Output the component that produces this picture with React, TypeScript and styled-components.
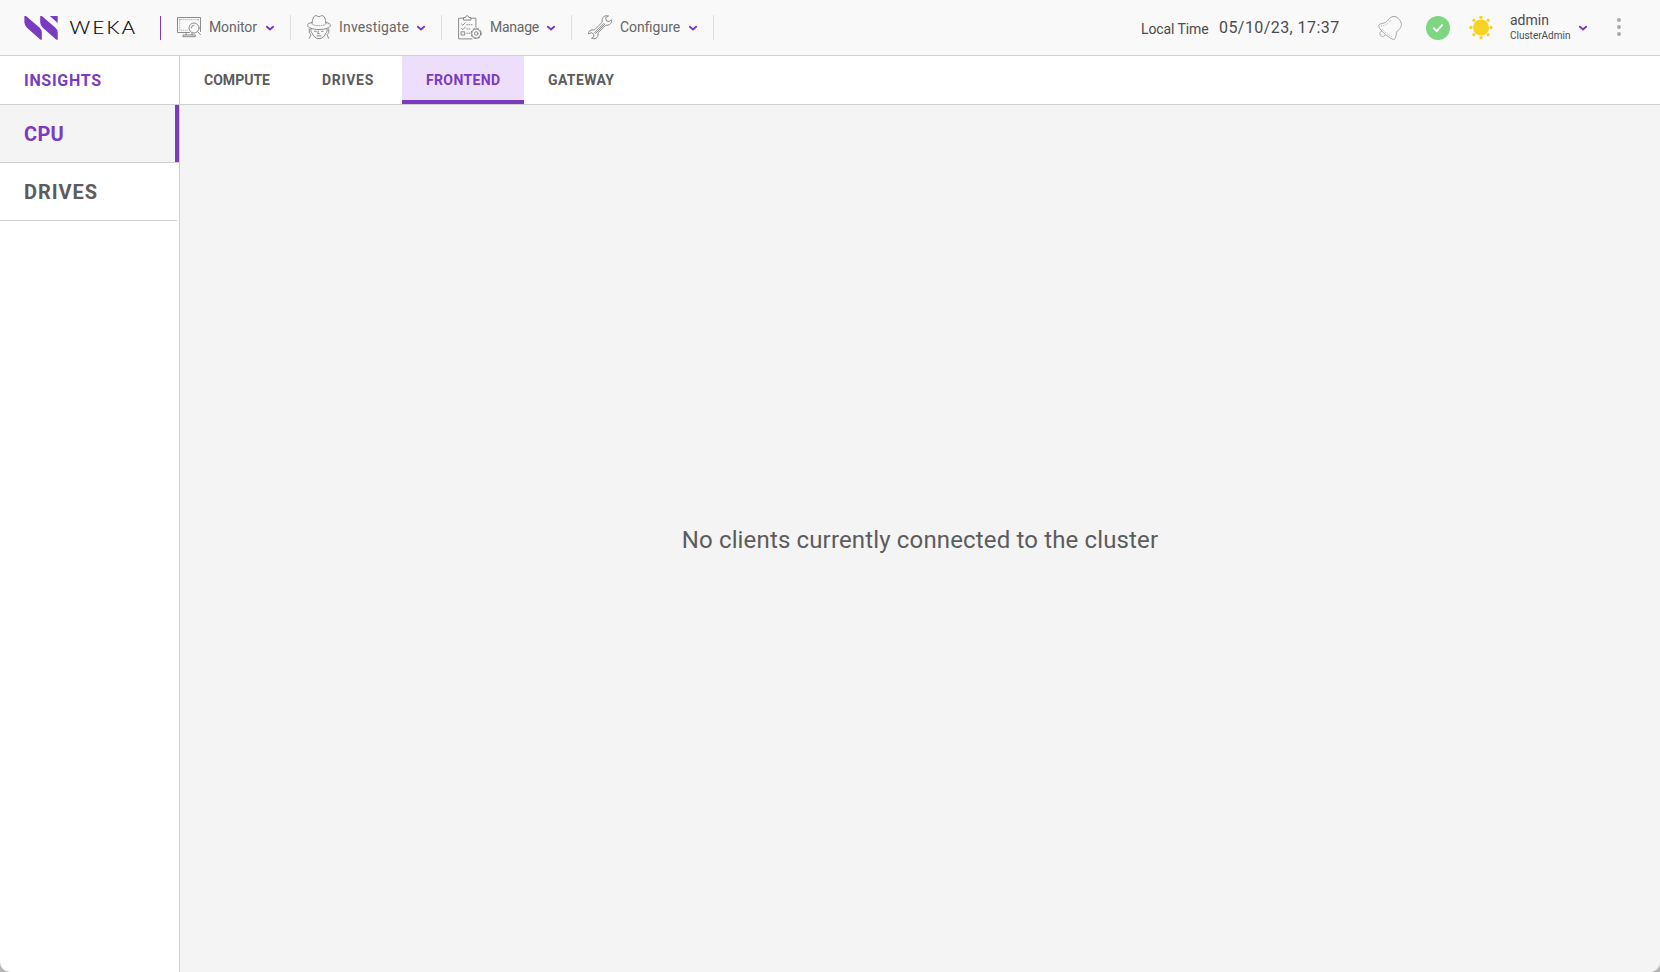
import React from 'react';
import styled, { createGlobalStyle } from 'styled-components';

const purple = '#7a3bc1';
const line = '#d0d0d0';

const GlobalStyle = createGlobalStyle`
  * { box-sizing: border-box; }
  html { background: #b5b5b5; }
  body { margin: 0; font-family: Roboto, "Open Sans", sans-serif; color: #5c5c5c; }
`;

const Window = styled.div`
  display: flex;
  flex-direction: column;
  height: 100vh;
  overflow: hidden;
  background: #fff;
  border-radius: 0 0 10px 10px;
`;

const Header = styled.header`
  display: flex;
  align-items: center;
  flex: none;
  height: 56px;
  padding: 0 39px 0 24px;
  background: #f9f9f9;
  border-bottom: 1px solid ${line};
`;

const Brand = styled.div`
  display: flex;
  align-items: center;
  width: 137px;
  height: 24px;
  border-right: 1px solid ${purple};
  margin-top: 1px;
`;

const Nav = styled.nav`
  display: flex;
`;

const NavItem = styled.div<{ $width: number }>`
  display: flex;
  align-items: center;
  width: ${p => p.$width}px;
  height: 25px;
  padding: 0 15px 0 16px;
  border-right: 1px solid #dedede;
`;

const NavLabel = styled.span<{ $tracking: number }>`
  flex: 1;
  margin: -1px 0 0 8px;
  font-size: 14px;
  line-height: 20px;
  letter-spacing: ${p => p.$tracking}px;
  white-space: nowrap;
  color: #666;
`;

const Status = styled.div`
  display: flex;
  align-items: center;
  margin-left: auto;
`;

const ClockLabel = styled.span`
  width: 78px;
  padding-top: 2px;
  font-size: 14px;
  line-height: 20px;
  letter-spacing: -0.1px;
  color: #4c4c4c;
`;

const ClockTime = styled.span`
  width: 159px;
  padding-top: 1px;
  font-size: 16px;
  line-height: 20px;
  letter-spacing: 0.43px;
  color: #4c4c4c;
`;

const StatusIcons = styled.div`
  display: grid;
  grid-template-columns: 48px 43px 24px;
  margin-right: 17px;
  padding-top: 1px;
`;

const User = styled.div`
  width: 68px;
  color: #4c4c4c;
`;

const UserName = styled.div`
  font-size: 14px;
  line-height: 16px;
`;

const UserRole = styled.div`
  padding-top: 1px;
  font-size: 10px;
  line-height: 14px;
`;

const MenuButton = styled.div`
  display: flex;
  flex-direction: column;
  gap: 3px;
  margin: -1px 0 0 29px;
`;

const Dot = styled.i`
  width: 4px;
  height: 4px;
  border-radius: 50%;
  background: #a9a9a9;
`;

const Body = styled.div`
  display: flex;
  flex: 1;
  min-height: 0;
`;

const Sidebar = styled.aside`
  flex: none;
  width: 180px;
  border-right: 1px solid ${line};
`;

const SidebarTitle = styled.div`
  height: 49px;
  padding-left: 24px;
  border-bottom: 1px solid ${line};
  font-size: 16px;
  font-weight: 700;
  line-height: 49px;
  letter-spacing: 0.7px;
  color: ${purple};
`;

const SidebarItem = styled.div<{ $active?: boolean; $tracking: number }>`
  height: 58px;
  padding-left: 24px;
  border-bottom: 1px solid ${line};
  font-size: 20px;
  font-weight: 700;
  line-height: 59px;
  letter-spacing: ${p => p.$tracking}px;
  color: ${p => (p.$active ? purple : '#5c5c5c')};
  background: ${p => (p.$active ? '#f4f4f4' : '#fff')};
  box-shadow: ${p => (p.$active ? `inset -4px 0 ${purple}` : 'none')};
  margin-right: ${p => (p.$active ? 0 : 2)}px;
`;

const Main = styled.main`
  display: flex;
  flex-direction: column;
  flex: 1;
`;

const Tabs = styled.div`
  display: flex;
  height: 49px;
  background: #fff;
  border-bottom: 1px solid ${line};
`;

const Tab = styled.div<{ $width: number; $tracking: number; $active?: boolean }>`
  width: ${p => p.$width}px;
  padding-left: 24px;
  font-size: 14px;
  font-weight: 700;
  line-height: 48px;
  letter-spacing: ${p => p.$tracking}px;
  color: ${p => (p.$active ? purple : '#5c5c5c')};
  background: ${p => (p.$active ? '#eddffb' : 'transparent')};
  box-shadow: ${p => (p.$active ? `inset 0 -4px ${purple}` : 'none')};
`;

const Empty = styled.div`
  display: flex;
  align-items: center;
  justify-content: center;
  flex: 1;
  padding-top: 2px;
  background: #f4f4f4;
  font-size: 24px;
  letter-spacing: 0.15px;
`;

const Logo = () => (
  <svg width="112" height="26" viewBox="0 0 112 26">
    <g fill={purple}>
      <path d="M.4 1H2L15.4 12.6 Q17.800 14.700 17.800 17.500 V24.800H16.500L3 12.700 Q.4 10.300 .4 7.200Z" />
      <path d="M16.200 1H17.800L31.200 12.600 Q33.700 14.700 33.700 17.500 V24.800H32.400L18.800 12.700 Q16.200 10.300 16.200 7.200Z" />
      <path d="M25.800 1H33.700V8Z" />
    </g>
    <text transform="translate(45.500 19) scale(1.150 1)" textLength="57" fontFamily="Lato, sans-serif" fontWeight="300" fontSize="17.600" fill="#000" stroke="#000" strokeWidth=".2">WEKA</text>
  </svg>
);

const Chevron = () => (
  <svg width="10" height="10" viewBox="0 0 10 10" fill="none" stroke={purple} strokeWidth="1.9" strokeLinecap="round" strokeLinejoin="round">
    <path d="M1.9 3.7 5 6.500 8.100 3.700" />
  </svg>
);

const LineIcon = ({ children }: { children: React.ReactNode }) => (
  <svg width="24" height="25" viewBox="0 0 24 25" fill="none" stroke="#858585" strokeWidth="0.95" strokeLinecap="round" strokeLinejoin="round">
    {children}
  </svg>
);

const MonitorIcon = () => (
  <LineIcon>
    <path d="M12.500 17.500H.5v-15h23v14" />
    <path d="M2.700 4.600h18.700M2.700 4.600v10.600h8M21.400 4.600v2" strokeWidth=".7" strokeDasharray=".3 1.700" />
    <circle cx="17" cy="13" r="5" />
    <path d="M14.300 13a2.800 2.800 0 0 1 2.700-2.800M20.700 16.800l2.800 2.800M9.200 17.700v2.100M15 18.300v1.500M6.300 20h12v1.700h-12z" />
  </LineIcon>
);

const DetectiveIcon = () => (
  <LineIcon>
    <path d="M5 8.700C5.500 4 6.400.7 9 .6c1.200 0 1.500 1 3 1s1.800-1 3-1c2.600.1 3.500 3.400 4 8.100" />
    <path d="M5 7.500c-3 .4-4.500 1.600-4.500 2.800C.6 12.800 6 14.500 12 14.500s11.400-1.700 11.500-4.200c0-1.200-1.500-2.400-4.500-2.800" />
    <path d="M6 9.700c3 1.300 9 1.300 12 0" strokeDasharray=".5 1.500" />
    <path d="M4 13.500c-.4 3 .2 4 1.300 4.700.5 2.500 3.300 5.500 6.700 5.500s6.200-3 6.700-5.500c1.100-.7 1.700-1.700 1.300-4.700M11.300 16l-.6 2.700h1.600M10 20.900h4M7.500 16.300h1.800M14.500 16.300h1.600" />
    <path d="M2.300 14v3.500L4 19.800l-1.700 3.500M21.700 14v3.500L20 19.800l1.700 3.500" />
  </LineIcon>
);

const ClipboardIcon = () => (
  <LineIcon>
    <path d="M5.500 3.200H.6v20.700h13.500M13 3.200h4.900v9" />
    <path d="M5.500 4.700V2.500h2Q7.700.7 9.200.7t1.700 1.800h2v2.200z" />
    <path d="m3.500 9 1.300 1.200L7.200 7.800M3.500 13.500l1.300 1.200 2.400-2.400M3.500 16.800h3.200V20H3.500z" />
    <path d="M8.800 9.700h6.400M8.800 14h4M8.800 18.300h3" strokeDasharray=".7 1.500" />
    <circle cx="18.200" cy="18.500" r="4.500" />
    <circle cx="18.200" cy="18.500" r="5.100" strokeDasharray="1.900 2.100" />
    <circle cx="18.200" cy="18.500" r="1.800" />
  </LineIcon>
);

const WrenchIcon = () => (
  <LineIcon>
    <path d="M20.200.9c-3-1-6.300 1-6 5 .1.900-.1 1.500-.7 2L7 14.400c-.5.500-1 .6-1.800.5C2 14.600.3 16.600.5 19l2.700-1.300 2.500 1.200.1 2.700-2.300 1.600c3.300 1.600 6.900-.6 6.500-4.200 0-.7.100-1.200.6-1.700l6.600-6.600c.5-.5 1-.6 1.800-.5 3 .2 5.100-2.600 4.400-5.600l-2.300 2-2.800-.8-.5-2.800z" />
    <path d="m7 17.200 8.600-8.600 1 .8L8 18z" />
  </LineIcon>
);

const BellIcon = () => (
  <svg width="24" height="24" viewBox="0 0 24 24" fill="none" stroke="#a5a5a5" strokeWidth="1" strokeLinejoin="round">
    <path d="M.8 9.200C1.300 8 3.500 7.500 6 7c2.500-.5 3.300-2.300 5.200-4.300C13.500.3 16.500-.2 19 1.400c.8.500 1.700 1.300 2.400 2.200 2.500 3 2.600 6.200.6 8.700-1.800 2.200-3.500 3-3.700 5.300-.2 2.400-.8 5.200-2 5.700-1.400.5-4.800-1.300-9.100-5C2.500 14.200.3 10.700.8 9.200z" />
    <path d="M3 10c6-.3 7.500-3.500 10-6M4 13c3.500 4 7 6.500 10.800 8" strokeDasharray=".8 1.500" />
    <path d="M3.800 15.300c-1.700.2-2.300 2-1.800 3.300.8 2.300 4.200 2.500 5.400.1" />
  </svg>
);

const HealthIcon = () => (
  <svg width="24" height="24" viewBox="0 0 24 24">
    <circle cx="12" cy="12" r="12" fill="#7ed683" />
    <path d="m7.800 12.300 3 2.900 5.300-6" fill="none" stroke="#fff" strokeWidth="2" strokeLinecap="round" strokeLinejoin="round" />
  </svg>
);

const SunIcon = () => (
  <svg width="24" height="24" viewBox="0 0 24 24" fill="#f7d323">
    <circle cx="12" cy="11.500" r="8" />
    {[0, 45, 90, 135, 180, 225, 270, 315].map(angle => (
      <circle key={angle} cx="12" cy="1.400" r="1.650" transform={`rotate(${angle} 12 11.500)`} />
    ))}
  </svg>
);

const navItems = [
  { label: 'Monitor', icon: <MonitorIcon />, width: 130, tracking: -0.1 },
  { label: 'Investigate', icon: <DetectiveIcon />, width: 151, tracking: 0.17 },
  { label: 'Manage', icon: <ClipboardIcon />, width: 130, tracking: -0.25 },
  { label: 'Configure', icon: <WrenchIcon />, width: 142, tracking: 0 },
];

const tabs = [
  { label: 'COMPUTE', width: 118, tracking: 0.02 },
  { label: 'DRIVES', width: 104, tracking: 0.7 },
  { label: 'FRONTEND', width: 122, tracking: 0.36, active: true },
  { label: 'GATEWAY', width: 114, tracking: 0.37 },
];

export default function App() {
  return (
    <>
      <GlobalStyle />
      <Window>
        <Header>
          <Brand><Logo /></Brand>
          <Nav>
            {navItems.map(item => (
              <NavItem key={item.label} $width={item.width}>
                {item.icon}
                <NavLabel $tracking={item.tracking}>{item.label}</NavLabel>
                <Chevron />
              </NavItem>
            ))}
          </Nav>
          <Status>
            <ClockLabel>Local Time</ClockLabel>
            <ClockTime>05/10/23, 17:37</ClockTime>
            <StatusIcons>
              <BellIcon />
              <HealthIcon />
              <SunIcon />
            </StatusIcons>
            <User>
              <UserName>admin</UserName>
              <UserRole>ClusterAdmin</UserRole>
            </User>
            <Chevron />
            <MenuButton><Dot /><Dot /><Dot /></MenuButton>
          </Status>
        </Header>
        <Body>
          <Sidebar>
            <SidebarTitle>INSIGHTS</SidebarTitle>
            <SidebarItem $active $tracking={0.3}>CPU</SidebarItem>
            <SidebarItem $tracking={0.95}>DRIVES</SidebarItem>
          </Sidebar>
          <Main>
            <Tabs>
              {tabs.map(tab => (
                <Tab key={tab.label} $width={tab.width} $tracking={tab.tracking} $active={tab.active}>{tab.label}</Tab>
              ))}
            </Tabs>
            <Empty>No clients currently connected to the cluster</Empty>
          </Main>
        </Body>
      </Window>
    </>
  );
}
